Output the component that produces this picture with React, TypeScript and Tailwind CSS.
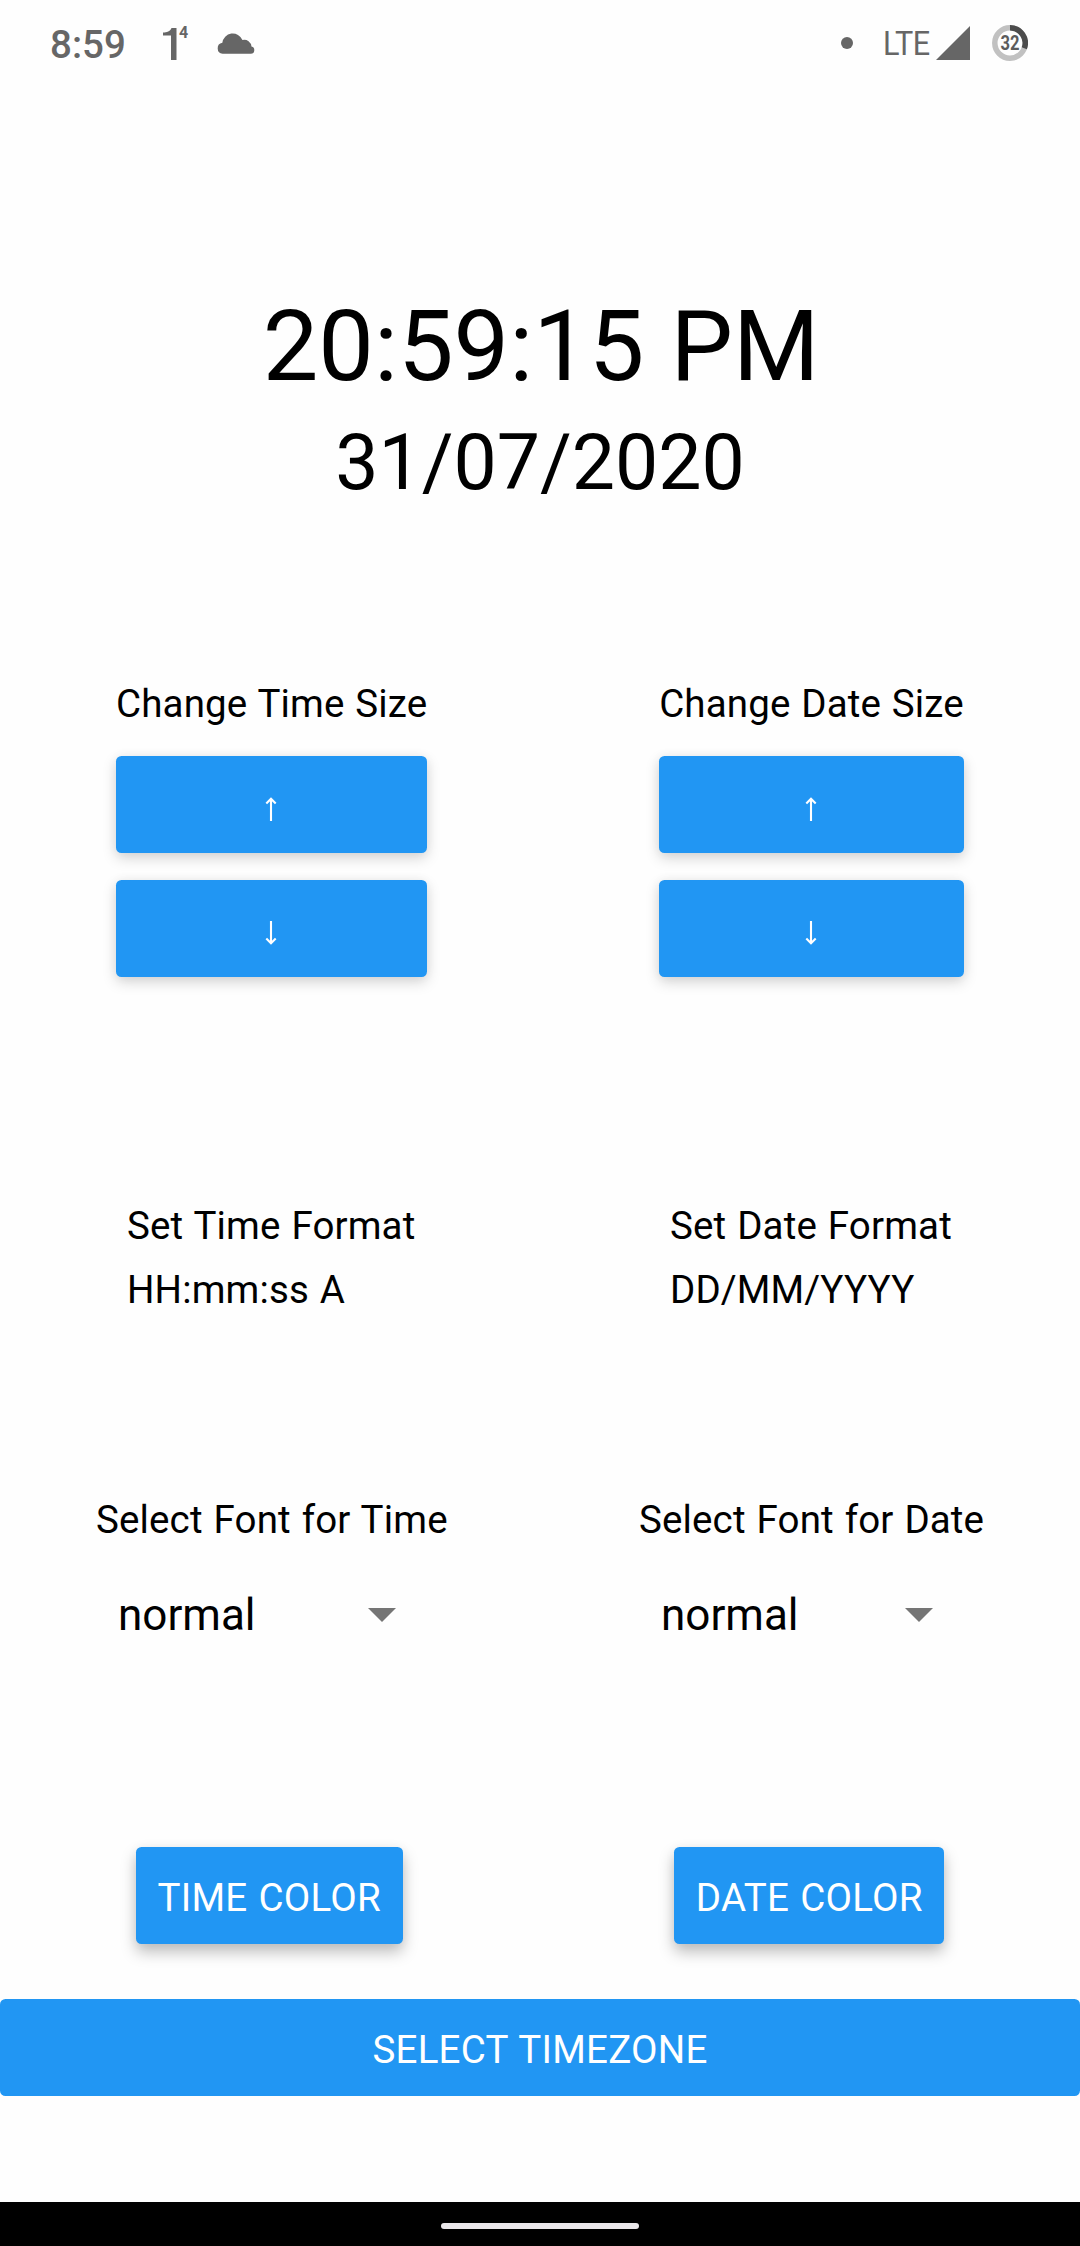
import type { ReactNode } from "react";

function StatusBar() {
  return (
    <header className="flex h-[84px] items-center justify-between pt-px pr-[52px] pl-[50px] text-[#666666]">
      <div className="flex items-center">
        <span className="w-[112px] pt-[5px] text-[38.5px] leading-[46px] font-medium">8:59</span>
        <span className="relative w-[55px] pt-1 text-[45px] leading-[46px] font-black">
          <svg width="30" height="40" viewBox="0 0 30 40" fill="#666666">
            <path d="M9.500 3H14.500V35H9V10.500H1V7.500C5 7.500 8 6.500 9.500 3Z" />
          </svg>
          <span className="absolute top-[2px] left-[17px] text-[16px] leading-[20px] font-bold">4</span>
        </span>
        <svg width="39" height="22" viewBox="0 0 38 21" fill="#666666">
          <path d="M5.500 21a5.400 5.400 0 0 1-.3-10.700A10.200 10.200 0 0 1 24.800 7.600 7 7 0 0 1 33.600 14a3.550 3.550 0 0 1-.6 7Z" />
        </svg>
      </div>
      <div className="flex items-center">
        <span className="mr-[30px] h-3 w-3 rounded-full bg-[#666666]" />
        <span className="w-[53px] origin-left scale-x-90 text-[34px] leading-[40px] tracking-[-0.500px]">LTE</span>
        <svg width="34" height="34" viewBox="0 0 34 34" fill="#666666" className="mr-[22px]">
          <path d="M34 0V34H0Z" />
        </svg>
        <svg width="36" height="36" viewBox="0 0 36 36">
          <circle cx="18" cy="18" r="15.200" fill="none" stroke="#c1c1c1" strokeWidth="5.500" />
          <path d="M18 2.800A15.200 15.200 0 0 1 32.300 23.300" fill="none" stroke="#4c4c4c" strokeWidth="5.500" />
          <text x="18" y="25" textAnchor="middle" fontSize="20" fontWeight="700" fill="#5c5c5c" textLength="19" lengthAdjust="spacingAndGlyphs">
            32
          </text>
        </svg>
      </div>
    </header>
  );
}

function Arrow({ down = false }: { down?: boolean }) {
  return (
    <svg width="12" height="24" viewBox="0 0 12 24" fill="none" stroke="white" strokeWidth="2.100" className={down ? "mr-[2px] rotate-180" : "mr-[2px]"}>
      <path d="M6 24V2M1.300 6.400 6 1.700l4.700 4.700" />
    </svg>
  );
}

function ArrowButton({ down }: { down?: boolean }) {
  return (
    <button className="flex h-[97px] w-full items-center justify-center rounded-[5.500px] bg-[#2196f3] pt-[8px] shadow-[0_5px_14px_rgba(0,0,0,0.17),0_0_12px_rgba(0,0,0,0.04)]">
      <Arrow down={down} />
    </button>
  );
}

function SizeControl({ label, className }: { label: string; className: string }) {
  return (
    <div className={className}>
      <p className="mb-[29px] text-center whitespace-nowrap">{label}</p>
      <ArrowButton />
      <div className="h-[27px]" />
      <ArrowButton down />
    </div>
  );
}

function FontPicker({ label, className }: { label: string; className: string }) {
  return (
    <div className={className}>
      <p className="text-center whitespace-nowrap">{label}</p>
      <div className="mt-[46px] flex items-center justify-between pr-[51px] pl-[22px]">
        <span className="text-[44px] leading-[52px] tracking-normal">normal</span>
        <svg width="28" height="14" viewBox="0 0 28 14" fill="#757575">
          <path d="M0 0H28L14 14Z" />
        </svg>
      </div>
    </div>
  );
}

function ColorButton({ className, children }: { className: string; children: ReactNode }) {
  return (
    <button className={className}>
      <span className="pt-[5px] tracking-[0.250px] whitespace-nowrap [word-spacing:1.200px]">{children}</span>
    </button>
  );
}

export default function App() {
  return (
    <div className="flex h-[2246px] w-[1080px] flex-col overflow-hidden bg-[#fefefe] font-[Roboto,sans-serif] text-[38.5px] leading-[46px] text-black">
      <StatusBar />
      <main className="flex flex-1 flex-col">
        <section className="mt-[204px] flex h-[206px] flex-col items-center gap-[14px]">
          <h1 className="pl-[2px] text-[99px] leading-[116px] [word-spacing:1.500px]">20:59:15 PM</h1>
          <h2 className="text-[77px] leading-[90px]">31/07/2020</h2>
        </section>

        <section className="mt-[187px] flex h-[296px] justify-around tracking-[0.140px] [word-spacing:1.100px]">
          <SizeControl label="Change Time Size" className="w-[311px]" />
          <SizeControl label="Change Date Size" className="w-[305px]" />
        </section>

        <section className="mt-[226px] flex h-[110px] justify-around tracking-[0.140px] [word-spacing:1.200px]">
          <div className="flex w-[289px] flex-col gap-[18px] whitespace-nowrap">
            <p>Set Time Format</p>
            <p>HH:mm:ss A</p>
          </div>
          <div className="flex w-[283px] flex-col gap-[18px] whitespace-nowrap">
            <p>Set Date Format</p>
            <p>DD/MM/YYYY</p>
          </div>
        </section>

        <section className="mt-[184px] flex h-[144px] justify-around tracking-[0.140px] [word-spacing:1.200px]">
          <FontPicker label="Select Font for Time" className="w-[351px]" />
          <FontPicker label="Select Font for Date" className="w-[345px]" />
        </section>

        <section className="mt-[206px] flex h-[97px] justify-around">
          <ColorButton className="flex w-[267px] items-center justify-center rounded-[5.500px] bg-[#2196f3] text-white shadow-[0_8px_15px_rgba(0,0,0,0.26),0_0_12px_rgba(0,0,0,0.04)]">
            TIME COLOR
          </ColorButton>
          <ColorButton className="flex w-[270px] items-center justify-center rounded-[5.500px] bg-[#2196f3] text-white shadow-[0_8px_15px_rgba(0,0,0,0.26),0_0_12px_rgba(0,0,0,0.04)]">
            DATE COLOR
          </ColorButton>
        </section>

        <ColorButton className="mt-[55px] flex h-[97px] w-full items-center justify-center rounded-[5.500px] bg-[#2196f3] text-white">
          SELECT TIMEZONE
        </ColorButton>
      </main>
      <footer className="flex h-[44px] justify-center bg-black pt-[21px]">
        <div className="h-[6px] w-[198px] rounded-[3px] bg-[#ebe8eb]" />
      </footer>
    </div>
  );
}
